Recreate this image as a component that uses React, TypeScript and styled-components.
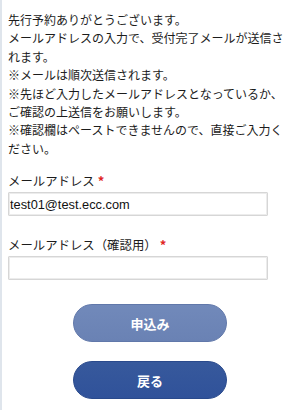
import styled, { createGlobalStyle } from 'styled-components';

const GlobalStyle = createGlobalStyle`
  html, body {
    margin: 0;
    padding: 0;
    background: #fff;
  }
  body {
    font-family: "Noto Sans CJK JP", "Noto Sans", sans-serif;
    color: #1c1c1c;
  }
`;

const Page = styled.div`
  box-sizing: border-box;
  width: 300px;
  min-height: 410px;
  border-left: 2px solid #dfe5ec;
  padding: 11px 8px 0 6px;
`;

const Intro = styled.p`
  margin: 0;
  font-size: 12px;
  line-height: 18.4px;
`;

const Field = styled.div<{ $top: number }>`
  display: flex;
  flex-direction: column;
  margin-top: ${(p) => p.$top}px;
`;

const Label = styled.label`
  font-size: 12.4px;
  line-height: 18px;
  display: flex;
  align-items: center;
  gap: 3px;
`;

const Required = styled.span`
  color: #e02424;
  font-size: 13px;
  font-weight: bold;
`;

const Input = styled.input`
  box-sizing: border-box;
  width: 260px;
  height: 24px;
  margin-top: 2px;
  border: 1px solid #d6d6d6;
  box-shadow: inset 0 0 0 1px #ececec;
  border-radius: 1px;
  padding: 0 1px;
  font-family: "Liberation Sans", Arial, sans-serif;
  font-size: 12.8px;
  color: #111;
  outline: none;
`;

const Actions = styled.div`
  display: flex;
  flex-direction: column;
  align-items: center;
  gap: 19px;
  margin-top: 24px;
`;

const Button = styled.button<{ $tone: 'light' | 'dark' }>`
  width: 154px;
  height: 38px;
  border-radius: 19px;
  border: 1px solid ${(p) => (p.$tone === 'light' ? '#6178aa' : '#2a4a8c')};
  background: ${(p) =>
    p.$tone === 'light'
      ? 'linear-gradient(#7189ba, #6a82b4)'
      : 'linear-gradient(#37599c, #30529a)'};
  color: #fff;
  font-family: "Noto Sans CJK JP", sans-serif;
  font-size: 13px;
  font-weight: bold;
  cursor: pointer;
`;

export default function App() {
  return (
    <>
      <GlobalStyle />
      <Page>
        <Intro>
          先行予約ありがとうございます。
          <br />
          メールアドレスの入力で、受付完了メールが送信されます。
          <br />
          ※メールは順次送信されます。
          <br />
          ※先ほど入力したメールアドレスとなっているか、ご確認の上送信をお願いします。
          <br />
          ※確認欄はペーストできませんので、直接ご入力ください。
        </Intro>
        <Field $top={14}>
          <Label>
            メールアドレス<Required>*</Required>
          </Label>
          <Input type="email" defaultValue="test01@test.ecc.com" />
        </Field>
        <Field $top={20}>
          <Label>
            メールアドレス（確認用）<Required>*</Required>
          </Label>
          <Input type="email" />
        </Field>
        <Actions>
          <Button $tone="light">申込み</Button>
          <Button $tone="dark">戻る</Button>
        </Actions>
      </Page>
    </>
  );
}
